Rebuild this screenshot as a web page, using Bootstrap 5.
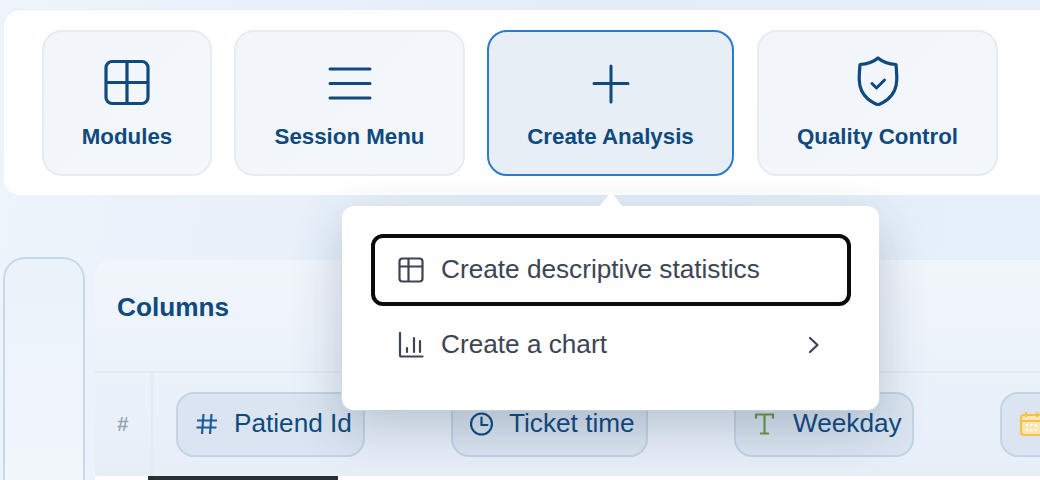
<!doctype html>
<html lang="en">
<head>
<meta charset="utf-8">
<title>Create Analysis</title>
<link rel="stylesheet" href="https://cdn.jsdelivr.net/npm/bootstrap@5.3.0/dist/css/bootstrap.min.css">
<style>
html,body{height:480px;overflow:hidden}
body{font-family:"Liberation Sans",Arial,sans-serif;background:linear-gradient(100deg,#eef4fb 0%,#e4eef9 50%,#e6f0fa 100%);position:relative;color:#0f4a7f}
.shell{padding:10px 0 0 4px}
.toolbar{background:#fff;border-radius:16px 0 0 16px;height:185px;padding:20px 0 0 38px;gap:22px;box-shadow:0 -1px 0 #e9eef4}
.tool{height:146px;border:2px solid #e8ebef;border-radius:20px;background:linear-gradient(135deg,#f2f5f9,#f3f8fd);color:#0f4a7f;font-weight:700;font-size:22.3px;line-height:26px;padding:0;flex-direction:column;align-items:center;justify-content:flex-start}
.tool svg{display:block;margin-top:24px;margin-bottom:18px;height:50px}
.tool-modules{width:170px}.tool-session{width:231px}.tool-create{width:247px}.tool-quality{width:241px;margin-left:1px}
.tool-create{border-color:#2a7bc8;background:#e8eef6}
.tool-create:hover,.tool:hover{color:#0f4a7f}
.workarea{margin-top:62px;gap:10px;margin-left:-1px;height:223px}
.siderail{width:82px;border:2px solid #c6d9ec;border-bottom:0;border-radius:22px 22px 0 0;background:linear-gradient(180deg,#eaf2fa,#f1f6fb);flex:none}
.colpanel{flex:1;margin-top:3px;border-radius:16px 0 0 0;background:linear-gradient(180deg,#f1f6fb,#e6eef8);display:flex;flex-direction:column;overflow:hidden}
.colhead{height:113px;border-bottom:2px solid #e3eaf2;padding:33px 0 0 22px;font-size:26.2px;line-height:28px;font-weight:700;color:#0f4a7f;flex:none}
.colrow{height:103px;flex:none}
.rownum{width:58px;flex:none;border-right:2px solid #e3eaf2;color:#9aa5b1;font-size:20px;font-weight:700;font-style:italic;padding:38px 0 0 22px;line-height:26px}
.chips{padding:19px 0 0 23px;gap:86px;flex-wrap:nowrap}
.chip{height:65px;border:2px solid #c3d4e6;border-radius:18px;background:#dbe5f1;color:#0f4a7f;font-size:26.2px;padding:0 0 2px 17px;gap:16px;white-space:nowrap;flex:none}
.chip-id{width:189px}.chip-time{width:197px}.chip-day{width:180px}.chip-date{width:120px}
.datastrip{height:4px;background:#fff;padding-left:53px;flex:none}
.datastrip span{display:block;width:190px;height:4px;background:#2a2d31}
.flyout{position:absolute;left:342px;top:206px;width:537px;height:204px;background:#fff;border-radius:12px;box-shadow:0 18px 50px rgba(30,50,85,.24),0 0 0 1px #edf0f4;padding:28px 28px 0 29px;color:#3d4454;z-index:5}
.flyout::before{content:"";position:absolute;left:258px;top:-14px;border-left:11px solid transparent;border-right:11px solid transparent;border-bottom:14px solid #fff}
.flyitem{height:72px;border-radius:12px;padding:0 27px 0 23px;gap:17px;font-size:26.2px;border:4px solid transparent;color:#3d4454;text-decoration:none}
.flyitem.active-item{border-color:#0b0b0c}
.flyitem + .flyitem{margin-top:3px}
</style>
</head>
<body>
<div class="shell">
  <div class="toolbar d-flex">
    <a class="tool tool-modules btn d-flex" href="#">
      <svg width="46" height="50" viewBox="0 0 46 50" fill="none" stroke="#0f4a7f" stroke-width="3.200"><rect x="2" y="5.500" width="42" height="42" rx="6"/><path d="M23 5.500v42M2 26.500h42"/></svg>
      Modules</a>
    <a class="tool tool-session btn d-flex" href="#">
      <svg width="44" height="50" viewBox="0 0 44 50" fill="none" stroke="#0f4a7f" stroke-width="3" stroke-linecap="round"><path d="M2 13h40M2 27.500h40M2 42h40"/></svg>
      Session Menu</a>
    <a class="tool tool-create btn d-flex" href="#">
      <svg width="38" height="50" viewBox="0 0 38 50" fill="none" stroke="#0f4a7f" stroke-width="3" stroke-linecap="round"><path d="M19 10v36M2 27.500h34"/></svg>
      Create Analysis</a>
    <a class="tool tool-quality btn d-flex" href="#">
      <svg width="42" height="50" viewBox="0 0 42 50" fill="none" stroke="#0f4a7f" stroke-width="3.200" stroke-linecap="round" stroke-linejoin="round"><path d="M21 2c4 3.500 9 6 18 6.500 1 12 1.500 20-1.500 26C34.500 41 28 46 21 49 14 46 7.500 41 4.500 34.500 1.500 28.500 2 20.500 3 8.500 12 8 17 5.500 21 2Z"/><path d="M15 27.500l4.500 4.500 8-8" stroke-width="3"/></svg>
      Quality Control</a>
  </div>
  <div class="workarea d-flex">
    <div class="siderail"></div>
    <div class="colpanel">
      <div class="colhead">Columns</div>
      <div class="colrow d-flex">
        <div class="rownum">#</div>
        <div class="chips d-flex">
          <div class="chip chip-id d-flex align-items-center">
            <svg width="23" height="22" viewBox="0 0 23 22" fill="none" stroke="#1c5d99" stroke-width="2.200"><path d="M8.500 1 7 21M16.500 1 15 21M2 7.500h20M1.500 14.500h20"/></svg>
            Patiend Id</div>
          <div class="chip chip-time d-flex align-items-center">
            <svg width="23" height="24" viewBox="0 0 23 24" fill="none" stroke="#0f4a7f" stroke-width="2.200" stroke-linecap="round"><circle cx="11.500" cy="12" r="10.500"/><path d="M11.500 5.500V13h6"/></svg>
            Ticket time</div>
          <div class="chip chip-day d-flex align-items-center">
            <svg width="24" height="24" viewBox="0 0 24 24" fill="none" stroke="#6d9a45" stroke-width="2.200"><path d="M3 6.500V2.500h17V6.500M11.500 2.500v19M7 21.500h9"/></svg>
            Weekday</div>
          <div class="chip chip-date d-flex align-items-center">
            <svg width="24" height="26" viewBox="0 0 24 26" fill="#fbe6b4" stroke="#f8c14a" stroke-width="2.200"><rect x="2" y="4" width="21" height="20" rx="3"/><path d="M2 10h21M7 1v5M18 1v5"/><path d="M7 14h2M11.500 14h2M16 14h2M7 19h2M11.500 19h2M16 19h2" stroke="#fff" stroke-width="2"/></svg>
          </div>
        </div>
      </div>
      <div class="datastrip"><span></span></div>
    </div>
  </div>
</div>
<div class="flyout">
  <a class="flyitem active-item d-flex align-items-center" href="#">
    <svg width="26" height="26" viewBox="0 0 26 26" fill="none" stroke="#3d4454" stroke-width="2.200" stroke-linejoin="round"><rect x="1.500" y="1.500" width="23" height="23" rx="3"/><path d="M1.500 9.500h23M10.500 1.500V24.500"/></svg>
    Create descriptive statistics</a>
  <a class="flyitem d-flex align-items-center" href="#">
    <svg width="26" height="26" viewBox="0 0 26 26" fill="none" stroke="#3d4454" stroke-width="2.200" stroke-linecap="round"><path d="M2 1v22a1.500 1.500 0 0 0 1.500 1.500H24.500M9 20v-4M16 20V6M22 20V9"/></svg>
    <span>Create a chart</span>
    <svg class="ms-auto" width="12" height="20" viewBox="0 0 12 20" fill="none" stroke="#3d4454" stroke-width="2.200" stroke-linecap="round" stroke-linejoin="round"><path d="M2 3l7.500 7L2 17"/></svg>
  </a>
</div>
<script src="https://cdn.jsdelivr.net/npm/bootstrap@5.3.0/dist/js/bootstrap.bundle.min.js"></script>
</body>
</html>
